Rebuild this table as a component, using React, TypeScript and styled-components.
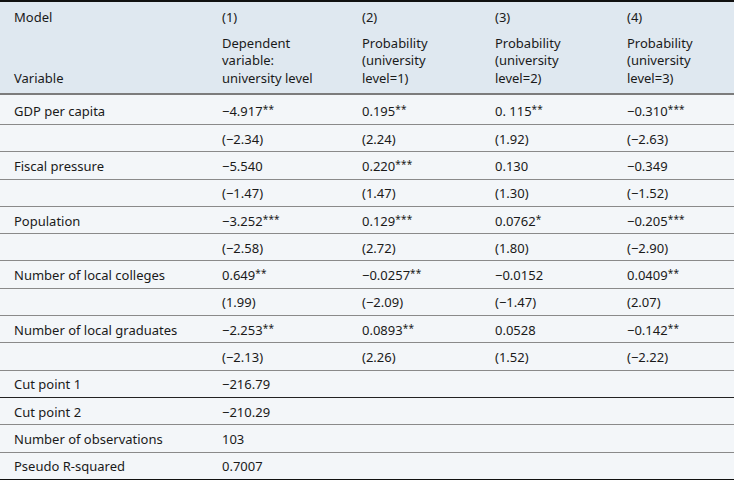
import React from "react";
import styled, { createGlobalStyle } from "styled-components";

const Global = createGlobalStyle`
  html, body { margin: 0; padding: 0; background: #f3f6f9; }
  body { font-family: "Noto Sans", "Open Sans", sans-serif; color: #1a1a1a; }
`;

const Table = styled.table`
  width: 734px;
  border-collapse: collapse;
  table-layout: fixed;
  font-size: 13px;
  border-top: 2px solid #111;
  border-bottom: 1px solid #111;
`;

const Head = styled.thead`
  background: #dfe8f0;
  border-bottom: 2px solid #7c7c7c;
`;

const HCell = styled.th<{ $tall?: boolean }>`
  text-align: left;
  font-weight: 400;
  padding: ${(p) => (p.$tall ? "4px 14px 6px 14px" : "7px 14px 4px 14px")};
  vertical-align: bottom;
  line-height: 17.5px;
`;

const Row = styled.tr<{ $dark?: boolean }>`
  border-top: 1px solid ${(p) => (p.$dark ? "#222" : "#8a8a8a")};
  &:first-child { border-top: none; }
`;

const Cell = styled.td<{ $first?: boolean }>`
  padding: ${(p) => (p.$first ? "3px 14px 0 14px" : "1px 14px 0 14px")};
  height: ${(p) => (p.$first ? "26px" : "25.3px")};
  line-height: 18px;
  vertical-align: middle;
  white-space: nowrap;
`;

const Stars = styled.sup`
  font-size: 10px;
  vertical-align: 3px;
  line-height: 0;
  letter-spacing: 0.2px;
`;

type Val = string;

const V = ({ v }: { v: Val }) => {
  const m = v.match(/^(.*?)(\*+)$/);
  if (!m) return <>{v}</>;
  return (
    <>
      {m[1]}
      <Stars>{m[2]}</Stars>
    </>
  );
};

const rows: { label: string; vals: Val[]; dark?: boolean }[] = [
  { label: "GDP per capita", vals: ["−4.917**", "0.195**", "0. 115**", "−0.310***"] },
  { label: "", vals: ["(−2.34)", "(2.24)", "(1.92)", "(−2.63)"] },
  { label: "Fiscal pressure", vals: ["−5.540", "0.220***", "0.130", "−0.349"] },
  { label: "", vals: ["(−1.47)", "(1.47)", "(1.30)", "(−1.52)"] },
  { label: "Population", vals: ["−3.252***", "0.129***", "0.0762*", "−0.205***"] },
  { label: "", vals: ["(−2.58)", "(2.72)", "(1.80)", "(−2.90)"] },
  { label: "Number of local colleges", vals: ["0.649**", "−0.0257**", "−0.0152", "0.0409**"] },
  { label: "", vals: ["(1.99)", "(−2.09)", "(−1.47)", "(2.07)"] },
  { label: "Number of local graduates", vals: ["−2.253**", "0.0893**", "0.0528", "−0.142**"] },
  { label: "", vals: ["(−2.13)", "(2.26)", "(1.52)", "(−2.22)"] },
  { label: "Cut point 1", vals: ["−216.79", "", "", ""] },
  { label: "Cut point 2", vals: ["−210.29", "", "", ""], dark: true },
  { label: "Number of observations", vals: ["103", "", "", ""] },
  { label: "Pseudo R-squared", vals: ["0.7007", "", "", ""] },
];

const widths = [208, 140, 133, 132, 121];

export default function App() {
  return (
    <>
      <Global />
      <Table>
        <colgroup>
          {widths.map((w, i) => (
            <col key={i} style={{ width: w }} />
          ))}
        </colgroup>
        <Head>
          <tr>
            <HCell>Model</HCell>
            <HCell>(1)</HCell>
            <HCell>(2)</HCell>
            <HCell>(3)</HCell>
            <HCell>(4)</HCell>
          </tr>
          <tr>
            <HCell $tall>Variable</HCell>
            <HCell $tall>
              Dependent
              <br />
              variable:
              <br />
              university level
            </HCell>
            <HCell $tall>
              Probability
              <br />
              (university
              <br />
              level=1)
            </HCell>
            <HCell $tall>
              Probability
              <br />
              (university
              <br />
              level=2)
            </HCell>
            <HCell $tall>
              Probability
              <br />
              (university
              <br />
              level=3)
            </HCell>
          </tr>
        </Head>
        <tbody>
          {rows.map((r, i) => (
            <Row key={i} $dark={r.dark}>
              <Cell $first={i === 0}>{r.label}</Cell>
              {r.vals.map((v, j) => (
                <Cell key={j} $first={i === 0}>
                  <V v={v} />
                </Cell>
              ))}
            </Row>
          ))}
        </tbody>
      </Table>
    </>
  );
}
